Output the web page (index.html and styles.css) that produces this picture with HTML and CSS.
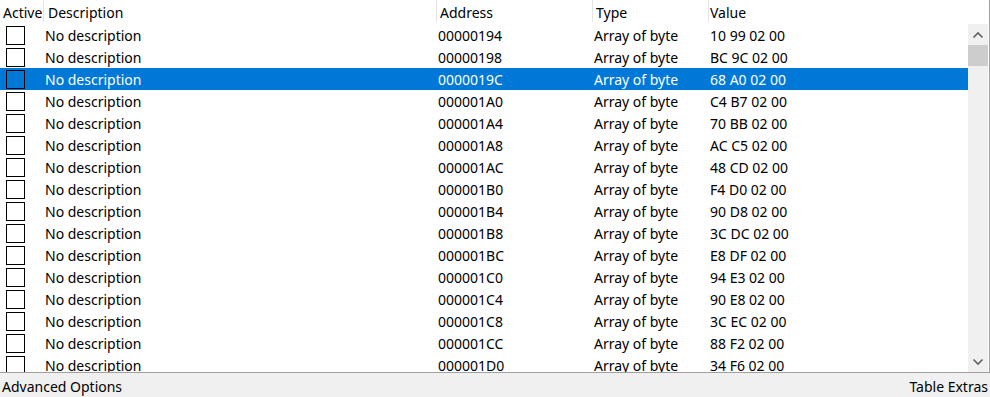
FILE: index.html
```html
<!DOCTYPE html>
<html>
<head>
<meta charset="utf-8">
<link rel="stylesheet" href="styles.css">
</head>
<body>
<div class="app">
  <div class="list">
    <div class="grid">
      <div class="header">
        <div class="hcell c-active">Active</div>
        <div class="hcell c-desc">Description</div>
        <div class="hcell c-addr">Address</div>
        <div class="hcell c-type">Type</div>
        <div class="hcell c-val">Value</div>
      </div>
      <div class="body">
        <div class="row"><div class="cell c-active"><span class="cb"></span></div><div class="cell c-desc">No description</div><div class="cell c-addr">00000194</div><div class="cell c-type">Array of byte</div><div class="cell c-val">10 99 02 00</div></div>
        <div class="row"><div class="cell c-active"><span class="cb"></span></div><div class="cell c-desc">No description</div><div class="cell c-addr">00000198</div><div class="cell c-type">Array of byte</div><div class="cell c-val">BC 9C 02 00</div></div>
        <div class="row selected"><div class="cell c-active"><span class="cb"></span></div><div class="cell c-desc">No description</div><div class="cell c-addr">0000019C</div><div class="cell c-type">Array of byte</div><div class="cell c-val">68 A0 02 00</div></div>
        <div class="row"><div class="cell c-active"><span class="cb"></span></div><div class="cell c-desc">No description</div><div class="cell c-addr">000001A0</div><div class="cell c-type">Array of byte</div><div class="cell c-val">C4 B7 02 00</div></div>
        <div class="row"><div class="cell c-active"><span class="cb"></span></div><div class="cell c-desc">No description</div><div class="cell c-addr">000001A4</div><div class="cell c-type">Array of byte</div><div class="cell c-val">70 BB 02 00</div></div>
        <div class="row"><div class="cell c-active"><span class="cb"></span></div><div class="cell c-desc">No description</div><div class="cell c-addr">000001A8</div><div class="cell c-type">Array of byte</div><div class="cell c-val">AC C5 02 00</div></div>
        <div class="row"><div class="cell c-active"><span class="cb"></span></div><div class="cell c-desc">No description</div><div class="cell c-addr">000001AC</div><div class="cell c-type">Array of byte</div><div class="cell c-val">48 CD 02 00</div></div>
        <div class="row"><div class="cell c-active"><span class="cb"></span></div><div class="cell c-desc">No description</div><div class="cell c-addr">000001B0</div><div class="cell c-type">Array of byte</div><div class="cell c-val">F4 D0 02 00</div></div>
        <div class="row"><div class="cell c-active"><span class="cb"></span></div><div class="cell c-desc">No description</div><div class="cell c-addr">000001B4</div><div class="cell c-type">Array of byte</div><div class="cell c-val">90 D8 02 00</div></div>
        <div class="row"><div class="cell c-active"><span class="cb"></span></div><div class="cell c-desc">No description</div><div class="cell c-addr">000001B8</div><div class="cell c-type">Array of byte</div><div class="cell c-val">3C DC 02 00</div></div>
        <div class="row"><div class="cell c-active"><span class="cb"></span></div><div class="cell c-desc">No description</div><div class="cell c-addr">000001BC</div><div class="cell c-type">Array of byte</div><div class="cell c-val">E8 DF 02 00</div></div>
        <div class="row"><div class="cell c-active"><span class="cb"></span></div><div class="cell c-desc">No description</div><div class="cell c-addr">000001C0</div><div class="cell c-type">Array of byte</div><div class="cell c-val">94 E3 02 00</div></div>
        <div class="row"><div class="cell c-active"><span class="cb"></span></div><div class="cell c-desc">No description</div><div class="cell c-addr">000001C4</div><div class="cell c-type">Array of byte</div><div class="cell c-val">90 E8 02 00</div></div>
        <div class="row"><div class="cell c-active"><span class="cb"></span></div><div class="cell c-desc">No description</div><div class="cell c-addr">000001C8</div><div class="cell c-type">Array of byte</div><div class="cell c-val">3C EC 02 00</div></div>
        <div class="row"><div class="cell c-active"><span class="cb"></span></div><div class="cell c-desc">No description</div><div class="cell c-addr">000001CC</div><div class="cell c-type">Array of byte</div><div class="cell c-val">88 F2 02 00</div></div>
        <div class="row"><div class="cell c-active"><span class="cb"></span></div><div class="cell c-desc">No description</div><div class="cell c-addr">000001D0</div><div class="cell c-type">Array of byte</div><div class="cell c-val">34 F6 02 00</div></div>
      </div>
    </div>
    <div class="vscroll">
      <div class="vs-spacer"></div>
      <div class="vs-track">
        <div class="vs-btn">
          <svg width="12" height="8" viewBox="0 0 12 8"><path d="M1.5 6.5 L6 2 L10.5 6.5" fill="none" stroke="#606060" stroke-width="1.6"/></svg>
        </div>
        <div class="vs-thumb"></div>
        <div class="vs-fill"></div>
        <div class="vs-btn">
          <svg width="12" height="8" viewBox="0 0 12 8"><path d="M1.5 1.5 L6 6 L10.5 1.5" fill="none" stroke="#606060" stroke-width="1.6"/></svg>
        </div>
      </div>
    </div>
    <div class="edge"></div>
  </div>
  <div class="footer">
    <span>Advanced Options</span>
    <span>Table Extras</span>
  </div>
</div>
</body>
</html>
```

FILE: styles.css
```css
html, body {
  margin: 0;
  padding: 0;
  background: #ffffff;
}
.app {
  width: 990px;
  height: 397px;
  display: flex;
  flex-direction: column;
  font-family: "Noto Sans", "Open Sans", sans-serif;
  font-size: 14px;
  color: #000000;
  overflow: hidden;
}
.list {
  height: 372px;
  display: flex;
  border-bottom: 1px solid #a0a0a0;
  overflow: hidden;
}
.grid {
  width: 968px;
  display: flex;
  flex-direction: column;
  overflow: hidden;
}
.header {
  height: 24px;
  display: flex;
  flex: none;
}
.hcell {
  height: 22px;
  line-height: 26px;
  padding-left: 3px;
  box-sizing: border-box;
  white-space: nowrap;
  overflow: hidden;
  border-right: 1px solid #e5e5e5;
}
.hcell.c-active { padding-left: 3px; }
.hcell.c-desc { padding-left: 4px; }
.hcell.c-val { border-right: none; padding-left: 1px; }
.c-active { width: 44px; flex: none; }
.c-desc { width: 393px; flex: none; }
.c-addr { width: 156px; flex: none; }
.c-type { width: 116px; flex: none; }
.c-val { flex: 1; }
.body {
  display: flex;
  flex-direction: column;
}
.row {
  height: 22px;
  display: flex;
  flex: none;
  line-height: 24px;
  overflow: hidden;
}
.row.selected {
  background: #0078d7;
  color: #ffffff;
}
.cell {
  box-sizing: border-box;
  padding-left: 1px;
  white-space: nowrap;
  overflow: hidden;
}
.cell.c-active {
  padding: 2px 0 0 6px;
}
.cb {
  display: block;
  width: 19px;
  height: 19px;
  box-sizing: border-box;
  border: 1px solid #000000;
}
.row:not(.selected) .cb { background: #ffffff; }
.vscroll {
  width: 20px;
  display: flex;
  flex-direction: column;
  flex: none;
}
.vs-spacer { height: 24px; flex: none; }
.vs-track {
  flex: 1;
  background: #f0f0f0;
  display: flex;
  flex-direction: column;
}
.vs-btn {
  height: 21px;
  flex: none;
  display: flex;
  align-items: center;
  justify-content: center;
}
.vs-thumb {
  height: 21px;
  flex: none;
  background: #cdcdcd;
}
.vs-fill { flex: 1; }
.edge {
  width: 1px;
  margin-left: 1px;
  background: #a0a0a0;
  flex: none;
}
.footer {
  flex: 1;
  background: #f0f0f0;
  display: flex;
  justify-content: space-between;
  align-items: center;
  padding: 3px 2px 0 2px;
  line-height: 20px;
}
```
